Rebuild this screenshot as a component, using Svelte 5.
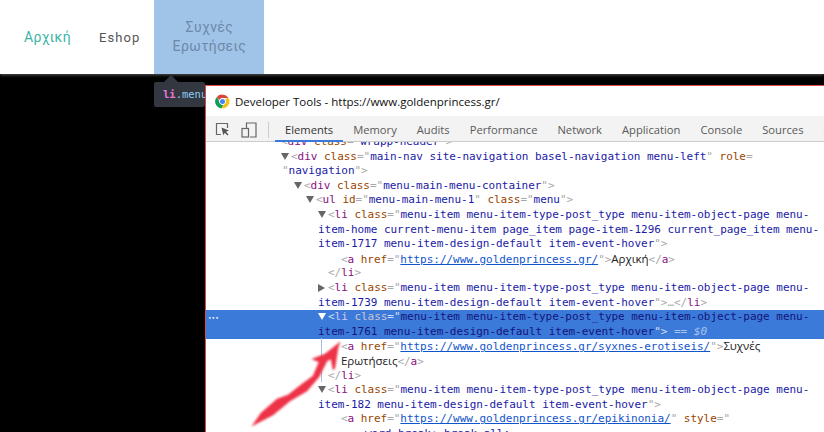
<script>
  const tabs = ["Elements", "Memory", "Audits", "Performance", "Network", "Application", "Console", "Sources", "Security"];

  const li = (v) => [["b", "<"], ["t", "li"], ["b", " "], ["n", "class"], ["b", "=\""], ["v", v]];
  const a = (url, rest) => [["b", "<"], ["t", "a"], ["b", " "], ["n", "href"], ["b", "=\""], ["u", url], ["b", "\""], ...rest];
  const close = [["b", "\">"]];

  const lines = [
    { x: 75, parts: [["b", "<"], ["t", "div"], ["b", " "], ["n", "class"], ["b", "=\""], ["v", "wrapp-header"], ["b", "\">"]] },
    { x: 85, arrow: "down", parts: [["b", "<"], ["t", "div"], ["b", " "], ["n", "class"], ["b", "=\""], ["v", "main-nav site-navigation basel-navigation menu-left"], ["b", "\" "], ["n", "role"], ["b", "="]] },
    { x: 76, parts: [["b", "\""], ["v", "navigation"], ["b", "\">"]] },
    { x: 98, arrow: "down", parts: [["b", "<"], ["t", "div"], ["b", " "], ["n", "class"], ["b", "=\""], ["v", "menu-main-menu-container"], ["b", "\">"]] },
    { x: 110, arrow: "down", parts: [["b", "<"], ["t", "ul"], ["b", " "], ["n", "id"], ["b", "=\""], ["v", "menu-main-menu-1"], ["b", "\" "], ["n", "class"], ["b", "=\""], ["v", "menu"], ["b", "\">"]] },
    { x: 122, arrow: "down", parts: li("menu-item menu-item-type-post_type menu-item-object-page menu-") },
    { x: 112, parts: [["v", "item-home current-menu-item page_item page-item-1296 current_page_item menu-"]] },
    { x: 112, parts: [["v", "item-1717 menu-item-design-default item-event-hover"], ...close] },
    { x: 135, parts: a("https://www.goldenprincess.gr/", [["b", ">"], ["x", "Αρχική"], ["b", "</"], ["t", "a"], ["b", ">"]]) },
    { x: 122, parts: [["b", "</"], ["t", "li"], ["b", ">"]] },
    { x: 122, arrow: "right", parts: li("menu-item menu-item-type-post_type menu-item-object-page menu-") },
    { x: 112, parts: [["v", "item-1739 menu-item-design-default item-event-hover"], ["b", "\">…</"], ["t", "li"], ["b", ">"]] },
    { x: 122, arrow: "down", sel: true, parts: li("menu-item menu-item-type-post_type menu-item-object-page menu-") },
    { x: 112, sel: true, parts: [["v", "item-1761 menu-item-design-default item-event-hover"], ["b", "\">"], ["e", " == $0"]] },
    { x: 135, parts: a("https://www.goldenprincess.gr/syxnes-erotiseis/", [["b", ">"], ["x", "Συχνές"]]) },
    { x: 135, parts: [["x", "Ερωτήσεις"], ["b", "</"], ["t", "a"], ["b", ">"]] },
    { x: 122, parts: [["b", "</"], ["t", "li"], ["b", ">"]] },
    { x: 122, arrow: "down", parts: li("menu-item menu-item-type-post_type menu-item-object-page menu-") },
    { x: 112, parts: [["v", "item-182 menu-item-design-default item-event-hover"], ...close] },
    { x: 135, parts: a("https://www.goldenprincess.gr/epikinonia/", [["b", " "], ["n", "style"], ["b", "=\""]]) },
    { x: 159, parts: [["v", "word-break: break-all;"]] },
  ];
</script>

<div class="page">
  <header class="site-head">
    <nav class="site-nav">
      <a class="nav-home" href="#home">Αρχική</a>
      <a class="nav-shop" href="#shop">Eshop</a>
      <a class="nav-faq" href="#faq">Συχνές<br />Ερωτήσεις</a>
    </nav>
  </header>

  <div class="inspect-tip"><span class="tip-tag">li</span><span class="tip-class">.menu</span></div>

  <section class="devtools">
    <div class="titlebar">
      <svg class="chrome" width="15" height="15" viewBox="0 0 24 24">
        <path d="M12 1a11 11 0 0 1 9.5 5.5H12a5.5 5.5 0 0 0-5.2 3.6L3 4.6A11 11 0 0 1 12 1z" fill="#db4437" />
        <path d="M3 4.6l4 7.4a5.5 5.5 0 0 0 6.6 5.3L10.5 22.9A11 11 0 0 1 3 4.6z" fill="#0f9d58" />
        <path d="M21.5 6.5A11 11 0 0 1 10.5 22.9l4.3-6.5A5.5 5.5 0 0 0 16.2 8z" fill="#f4c20d" />
        <circle cx="12" cy="12" r="5" fill="#fff" />
        <circle cx="12" cy="12" r="4" fill="#4285f4" />
      </svg>
      <span>Developer Tools - https://www.goldenprincess.gr/</span>
    </div>

    <div class="toolbar">
      <svg class="tool" width="15" height="15" viewBox="0 0 15 15">
        <path d="M6 12.5H1.5V1.5h11V6" fill="none" stroke="#666" stroke-width="1.2" />
        <path d="M6.5 5.5l7.5 3-3 1.2 2.500 2.800-1.200 1-2.400-2.800-1.600 2.600z" fill="#555" />
      </svg>
      <svg class="tool" width="16" height="16" viewBox="0 0 16 16">
        <path d="M5.5 6V1h9.5v14H9" fill="none" stroke="#666" stroke-width="1.2" />
        <rect x="1" y="6.5" width="6.5" height="8.5" fill="none" stroke="#666" stroke-width="1.2" />
      </svg>
      <i class="divider"></i>
      <div class="tabs">
        {#each tabs as tab, i}
          <span class="tab" class:active={i === 0}>{tab}</span>
        {/each}
      </div>
    </div>

    <div class="tree">
      {#each lines as line}
        <div class="row" class:sel={line.sel} style:padding-left="{line.x}px">
          {#if line.arrow}<i class="tri {line.arrow}"></i>{/if}{#each line.parts as [kind, text]}<span class={kind}>{text}</span>{/each}
        </div>
      {/each}
      <span class="dots">•••</span>
      <i class="guide"></i>
    </div>
  </section>

  <svg class="red-arrow" width="100" height="97" viewBox="0 0 100 97">
    <defs><filter id="soft"><feGaussianBlur stdDeviation="0.8" /></filter></defs>
    <path
      d="M92 7 L77 19 L64 24 L71 27 L65 41 L54 49 L40 60 L29 64 L13 78 L4 91 L25 80 L42 66 L59 56 L71 42 L79 26 L83 24 L85 35 L87 33 L90 13 Z"
      fill="#ee3346" stroke="#ee3346" stroke-width=".5" stroke-linejoin="round" filter="url(#soft)"
    />
  </svg>
</div>

<style>
  :global(body) { margin: 0; background: #000; }
  .page { position: relative; width: 824px; height: 432px; overflow: hidden; background: #000; }
  /* little pointer on top of the inspect tooltip */
  .page::before {
    content: ""; position: absolute; left: 164px; top: 75px; border: 7px solid transparent; border-top: 0;
    border-bottom-color: #333740;
  }

  .site-head {
    height: 74px; background: #fff; box-shadow: 0 1px 3px rgba(110, 110, 110, .8);
    font-family: Roboto, "Open Sans", sans-serif;
  }
  .site-nav { display: flex; align-items: stretch; height: 100%; padding-left: 24px; }
  .site-nav a { text-decoration: none; display: flex; align-items: center; }
  .nav-home { color: #3cb5a6; font-size: 14px; letter-spacing: .3px; margin-right: 28px; }
  .nav-shop { color: #555; font-size: 13px; letter-spacing: 1.1px; margin-right: 14px; }
  .nav-faq {
    width: 110px; justify-content: center; text-align: center; background: #9fc4e8;
    color: #6e88a8; font-size: 14px; line-height: 19px; letter-spacing: .4px;
  }

  .inspect-tip {
    position: absolute; left: 154px; top: 82px; width: 51px; height: 25px; box-sizing: border-box;
    padding: 4px 9px; background: #333740; border-radius: 2px; overflow: hidden; white-space: nowrap;
    font: bold 10.5px/17px "DejaVu Sans Mono", monospace;
  }
  .tip-tag { color: #e377d6; }
  .tip-class { color: #8ccbf0; font-weight: normal; }

  .devtools {
    position: absolute; left: 205px; top: 85px; right: 0; bottom: 0;
    display: flex; flex-direction: column; background: #fff;
    border-top: 1px solid #e04a4a; border-left: 1px solid #d9484d;
  }
  .titlebar {
    height: 30px; flex-shrink: 0; display: flex; align-items: center; gap: 5px; padding-left: 9px;
    font: 11.5px "Open Sans", sans-serif; color: #111;
  }
  .toolbar {
    height: 23px; padding: 2px 0 0 9px; flex-shrink: 0; display: flex; align-items: center; background: #f3f3f3;
    border-bottom: 1px solid #ccc; position: relative; white-space: nowrap;
  }
  .tool { flex-shrink: 0; margin-right: 11px; }
  .divider { width: 1px; height: 16px; background: #ccc; margin-right: 6px; flex-shrink: 0; }
  .tabs { display: flex; height: 100%; align-items: center; font: 11.2px "Open Sans", sans-serif; color: #5a5a5a; }
  .tab { padding: 0 10px; line-height: 23px; }
  .tab.active { color: #333; position: relative; }
  .tab.active::after {
    content: ""; position: absolute; left: 0; right: 0; bottom: -1px; height: 2px; background: #3879d9;
  }

  .tree {
    position: relative; flex: 1; min-height: 0; overflow: hidden;
    font: 11px/14.6px "DejaVu Sans Mono", monospace; letter-spacing: -.03px; color: #222;
  }
  .row { height: 14.6px; white-space: pre; position: relative; top: -7px; }
  .row.sel { background: #3b7ad9; }
  .tri { position: absolute; width: 0; height: 0; border-style: solid; border-color: transparent; }
  .tri.down { margin: 3px 0 0 -10px; border-width: 7px 4px 0; border-top-color: #666; }
  .tri.right { margin: 3px 0 0 -10px; border-width: 4px 0 4px 7px; border-left-color: #666; }
  .sel .tri.down { border-top-color: #fff; }

  .b { color: #a8a8a8; }
  .t { color: #881280; }
  .n { color: #994500; }
  .v { color: #1a1aa6; }
  .u { color: #1155cc; text-decoration: underline; }
  .x { color: #222; font-family: "Open Sans", sans-serif; font-size: 11.5px; }
  .e { color: #a8c3ec; font-style: italic; }
  .sel .b { color: #d5dff0; }
  .sel .t { color: #d8c8f0; }
  .sel .n { color: #c9c4d8; }
  .sel .v { color: #14147c; }

  .dots { position: absolute; left: 2px; top: 169px; color: #fff; font-size: 6px; line-height: 14px; }
  .guide { position: absolute; left: 115px; top: 196px; width: 1px; height: 44px; background: #a8c0e0; }

  .red-arrow { position: absolute; left: 248px; top: 335px; }
</style>
